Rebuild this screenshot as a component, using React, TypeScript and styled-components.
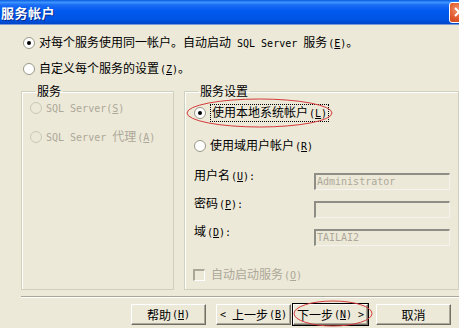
import React from "react";
import styled, { createGlobalStyle } from "styled-components";

const Global = createGlobalStyle`
  body {
    margin: 0;
    background: #ece9d8;
    font-family: "Noto Sans CJK SC", sans-serif;
    font-size: 12px;
  }
`

const Window = styled.div`
  position: relative;
  width: 459px;
  height: 328px;
  overflow: hidden;
  background: #ece9d8;
  display: flex;
  flex-direction: column;
`

const TitleBar = styled.div`
  height: 24px;
  flex: none;
  display: flex;
  align-items: center;
  justify-content: space-between;
  padding-left: 1px;
  background: linear-gradient(
    to bottom,
    #0a5ce0 0%,
    #3d95ff 10%,
    #1c6ef5 20%,
    #0058ee 45%,
    #0055e5 80%,
    #0046c8 100%
  );
  border-bottom: 1px solid #7a9ad8;
`

const Title = styled.div`
  color: #fff;
  font-weight: 700;
  font-size: 13px;
  letter-spacing: 0.5px;
  text-shadow: 1px 1px 0 #0a2a8a;
`

const CloseBtn = styled.div`
  width: 21px;
  height: 21px;
  margin-right: -11px;
  box-sizing: border-box;
  border: 1px solid #fff;
  border-radius: 3px;
  background: radial-gradient(circle at 40% 35%, #f0906a 0%, #e0582c 55%, #c23c14 100%);
  display: flex;
  align-items: center;
  padding-left: 4px;
`

const Body = styled.div`
  padding: 10px 0 0 21px;
  display: flex;
  flex-direction: column;
`

const RadioRow = styled.div<{ top?: number; indent?: number; disabled?: boolean }>`
  display: flex;
  align-items: center;
  height: 16px;
  gap: 4px;
  margin-top: ${(p) => p.top ?? 0}px;
  padding-left: ${(p) => p.indent ?? 0}px;
  color: ${(p) => (p.disabled ? "#aca899" : "#000")};
  white-space: nowrap;
  line-height: 16px;
`

const Lat = styled.span<{ pre?: number; post?: number }>`
  font-family: "DejaVu Sans Mono", "Liberation Mono", monospace;
  font-size: 10px;
  margin-left: ${(p) => p.pre ?? 0}px;
  margin-right: ${(p) => p.post ?? 0}px;
`

const Focus = styled.span`
  border: 1px dotted #000;
  padding: 0 1px;
  line-height: 14px;
`

const GroupRow = styled.div`
  display: flex;
  gap: 10px;
  margin-top: 6px;
  height: 207px;
`

const Group = styled.fieldset<{ w: number }>`
  width: ${(p) => p.w}px;
  box-sizing: border-box;
  margin: 0;
  padding: 0 8px 4px 8px;
  border: 1px solid #d0d0bf;
  box-shadow: inset 1px 1px 0 #fff;
  display: flex;
  flex-direction: column;
`

const Legend = styled.legend`
  padding: 0 2px;
  margin-left: 5px;
  line-height: 16px;
  color: #000;
`

const FieldRow = styled.div<{ top: number }>`
  display: flex;
  align-items: center;
  height: 17px;
  margin-top: ${(p) => p.top}px;
`

const FieldLabel = styled.div`
  width: 120px;
  flex: none;
  padding-left: 1px;
  line-height: 16px;
  margin-top: -11px;
`

const TextBox = styled.div`
  width: 136px;
  height: 17px;
  box-sizing: border-box;
  border-style: solid;
  border-width: 2px 1px 1px 2px;
  border-color: #8f8e86 #f4f3ee #f4f3ee #8f8e86;
  background: #ece9d8;
  color: #aca899;
  font-family: "DejaVu Sans Mono", "Liberation Mono", monospace;
  font-size: 10px;
  line-height: 14px;
  padding-left: 1px;
`

const CheckRow = styled.div<{ top: number }>`
  display: flex;
  align-items: center;
  gap: 6px;
  height: 16px;
  margin-top: ${(p) => p.top}px;
  color: #aca899;
  line-height: 16px;
`

const CheckBox = styled.div`
  width: 12px;
  height: 12px;
  box-sizing: border-box;
  border-style: solid;
  border-width: 2px 1px 1px 2px;
  border-color: #aca899 #fff #fff #aca899;
  background: #ece9d8;
`

const Separator = styled.div`
  margin-top: 6px;
  height: 0;
  border-top: 1px solid #aca899;
  border-bottom: 1px solid #fff;
`

const ButtonRow = styled.div`
  display: flex;
  margin-top: 6px;
  padding-left: 110px;
`

const Button = styled.div<{ gap?: number; focused?: boolean }>`
  width: 75px;
  height: 21px;
  box-sizing: border-box;
  margin-left: ${(p) => p.gap ?? 0}px;
  background: #ece9d8;
  border-style: solid;
  border-width: 1px;
  border-color: #fff #716f64 #716f64 #fff;
  box-shadow: inset -1px -1px 0 #aca899;
  outline: ${(p) => (p.focused ? "1px solid #000" : "none")};
  display: flex;
  align-items: center;
  justify-content: center;
  line-height: 16px;
  white-space: nowrap;
`

const Mark = styled.svg`
  position: absolute;
  overflow: visible;
  pointer-events: none;
`

const Radio = ({ checked, disabled }: { checked?: boolean; disabled?: boolean }) => (
  <svg width="12" height="12" viewBox="0 0 12 12" style={{ flex: "none" }}>
    <circle cx="6" cy="6" r="5.5" fill={disabled ? "#ece9d8" : "#fff"} stroke={disabled ? "#cac7b8" : "#9a9888"} />
    {checked && <circle cx="6" cy="6" r="2" fill="#000" />}
  </svg>
)

// accelerator key, e.g. (E); small gap after CJK text
const Acc = ({ c, gap = 1 }: { c: string; gap?: number }) => (
  <Lat pre={gap}>
    (<u>{c}</u>)
  </Lat>
)

export default function App() {
  return (
    <>
      <Global />
      <Window>
        <TitleBar>
          <Title>服务帐户</Title>
          <CloseBtn>
            <svg width="10" height="10" viewBox="0 0 10 10">
              <path d="M1 1 L9 9 M9 1 L1 9" stroke="#fff" strokeWidth="2" />
            </svg>
          </CloseBtn>
        </TitleBar>
        <Body>
          <RadioRow indent={2}>
            <Radio checked />
            <span>
              对每个服务使用同一帐户。自动启动<Lat pre={6} post={6}>SQL Server</Lat>服务<Acc c="E" />。
            </span>
          </RadioRow>
          <RadioRow indent={2} top={10}>
            <Radio />
            <span>
              自定义每个服务的设置<Acc c="Z" />。
            </span>
          </RadioRow>

          <GroupRow>
            <Group w={153}>
              <Legend>服务</Legend>
              <RadioRow disabled top={1}>
                <Radio disabled />
                <span>
                  <Lat>SQL Server</Lat>
                  <Acc c="S" gap={0} />
                </span>
              </RadioRow>
              <RadioRow disabled top={13}>
                <Radio disabled />
                <span>
                  <Lat post={6}>SQL Server</Lat>代理<Acc c="A" />
                </span>
              </RadioRow>
            </Group>

            <Group w={274}>
              <Legend>服务设置</Legend>
              <RadioRow top={6} indent={1}>
                <Radio checked />
                <Focus>
                  使用本地系统帐户<Acc c="L" />
                </Focus>
              </RadioRow>
              <RadioRow top={17} indent={1}>
                <Radio />
                <span>
                  使用域用户帐户<Acc c="R" />
                </span>
              </RadioRow>
              <FieldRow top={19}>
                <FieldLabel>
                  用户名<Acc c="U" />
                  <Lat>:</Lat>
                </FieldLabel>
                <TextBox>Administrator</TextBox>
              </FieldRow>
              <FieldRow top={11}>
                <FieldLabel>
                  密码<Acc c="P" />
                  <Lat>:</Lat>
                </FieldLabel>
                <TextBox />
              </FieldRow>
              <FieldRow top={11}>
                <FieldLabel>
                  域<Acc c="D" />
                  <Lat>:</Lat>
                </FieldLabel>
                <TextBox>TAILAI2</TextBox>
              </FieldRow>
              <CheckRow top={21}>
                <CheckBox />
                <span>
                  自动启动服务<Acc c="O" />
                </span>
              </CheckRow>
            </Group>
          </GroupRow>

          <Separator />

          <ButtonRow>
            <Button>
              帮助<Acc c="H" />
            </Button>
            <Button gap={10}>
              <Lat post={6}>&lt;</Lat>上一步<Acc c="B" />
            </Button>
            <Button gap={2} focused>
              下一步<Acc c="N" />
              <Lat pre={6}>&gt;</Lat>
            </Button>
            <Button gap={8}>取消</Button>
          </ButtonRow>
        </Body>

        <Mark width="147" height="30" style={{ left: 186, top: 98 }}>
          <ellipse cx="73.5" cy="15" rx="72.5" ry="14" fill="none" stroke="#d43a3a" strokeWidth="1" />
        </Mark>
        <Mark width="80" height="28" style={{ left: 293, top: 300 }}>
          <ellipse cx="40" cy="13.5" rx="39" ry="12.5" fill="none" stroke="#d43a3a" strokeWidth="1" />
        </Mark>
      </Window>
    </>
  )
}
